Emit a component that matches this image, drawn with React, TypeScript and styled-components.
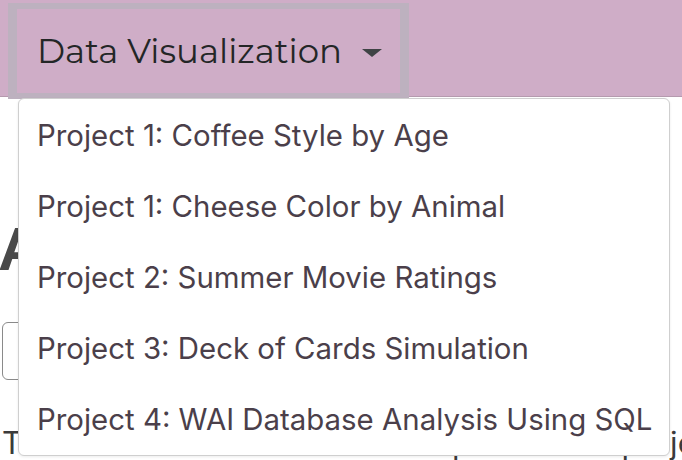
import styled, { createGlobalStyle } from "styled-components";

const projects = [
  "Project 1: Coffee Style by Age",
  "Project 1: Cheese Color by Animal",
  "Project 2: Summer Movie Ratings",
  "Project 3: Deck of Cards Simulation",
  "Project 4: WAI Database Analysis Using SQL",
];

const GlobalStyle = createGlobalStyle`
  html, body {
    margin: 0;
    padding: 0;
    background: #fff;
    overflow: hidden;
  }
  body {
    width: 682px;
    height: 460px;
    font-family: Inter, "Noto Sans", sans-serif;
  }
`;

const Page = styled.div`
  position: relative;
  width: 682px;
  height: 460px;
  overflow: hidden;
`;

const Header = styled.header`
  height: 97px;
  padding: 3px 0 0 8px;
  box-sizing: border-box;
  background: #cfadc7;
  border-bottom: 1px solid #b59aae;
`;

const NavItem = styled.div`
  position: relative;
  display: inline-block;
`;

const Toggle = styled.button`
  display: flex;
  align-items: center;
  gap: 20px;
  width: 401px;
  height: 96px;
  box-sizing: border-box;
  padding: 0 20px;
  border: solid #bdb1bf;
  border-width: 6px 9px;
  background: transparent;
  color: #232626;
  font-family: Montserrat, Inter, "Noto Sans", sans-serif;
  font-size: 34px;
  font-weight: 400;
  cursor: pointer;
  white-space: nowrap;
`;

const Caret = styled.span`
  flex: none;
  width: 0;
  height: 0;
  border-left: 10px solid transparent;
  border-right: 10px solid transparent;
  border-top: 8px solid #3f4345;
  margin-top: 3px;
`;

const Menu = styled.ul`
  position: absolute;
  top: 95px;
  left: 10px;
  width: 652px;
  box-sizing: border-box;
  margin: 0;
  padding: 1px 0 0;
  list-style: none;
  background: #fff;
  border: 1px solid #cfcfcf;
  border-radius: 6px;
  box-shadow: 0 1px 3px rgba(0, 0, 0, 0.08);
  z-index: 10;
`;

const MenuItem = styled.li`
  height: 71px;
  display: flex;
  align-items: center;
  padding: 0 18px;
  color: #4b3f4a;
  font-size: 29.4px;
  white-space: nowrap;
`;

const Main = styled.main`
  padding: 122px 0 0 2px;
  color: #444;
`;

const Title = styled.h1`
  margin: 0;
  font-family: "Liberation Sans", Arial, sans-serif;
  font-size: 62px;
  font-weight: 700;
  line-height: 60px;
  color: #4a4a4a;
  margin-left: -4px;
`;

const SearchBox = styled.div`
  margin-top: 43px;
  width: 300px;
  height: 58px;
  box-sizing: border-box;
  border: 1.5px solid #8a8a8a;
  border-radius: 6px;
`;

const Intro = styled.p`
  margin: 45px 0 0;
  font-size: 31px;
  line-height: 36px;
  color: #3b3b3b;
  white-space: nowrap;
`;

export default function App() {
  return (
    <Page>
      <GlobalStyle />
      <Header>
        <NavItem>
          <Toggle>
            <span>Data Visualization</span>
            <Caret />
          </Toggle>
          <Menu>
            {projects.map((p) => (
              <MenuItem key={p}>{p}</MenuItem>
            ))}
          </Menu>
        </NavItem>
      </Header>
      <Main>
        <Title>About</Title>
        <SearchBox />
        <Intro>This website was created as a portfolio of projects.</Intro>
      </Main>
    </Page>
  );
}
